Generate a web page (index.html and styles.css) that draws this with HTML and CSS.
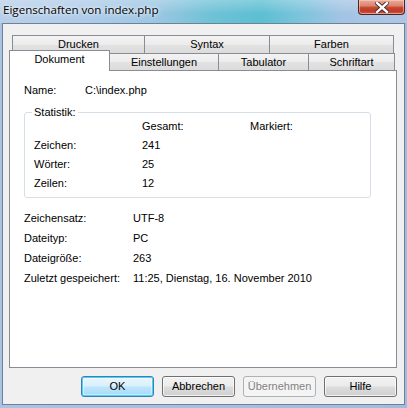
FILE: index.html
```html
<!DOCTYPE html>
<html lang="de">
<head>
<meta charset="utf-8">
<title>Eigenschaften von index.php</title>
<link rel="stylesheet" href="styles.css">
</head>
<body>
<div class="window">
  <div class="titlebar">
    <span class="title">Eigenschaften von index.php</span>
    <div class="close">
      <svg width="14" height="11" viewBox="0 0 14 11">
        <path d="M2 1 L12 10 M12 1 L2 10" stroke="#3a2a2a" stroke-width="4.2" stroke-linecap="square"/>
        <path d="M2 1 L12 10 M12 1 L2 10" stroke="#ffffff" stroke-width="2.4" stroke-linecap="square"/>
      </svg>
    </div>
  </div>
  <div class="client">
    <div class="tabs">
      <div class="tabrow row1">
        <div class="tab t-drucken">Drucken</div>
        <div class="tab t-syntax">Syntax</div>
        <div class="tab t-farben">Farben</div>
      </div>
      <div class="tabrow row2">
        <div class="tab sel t-dokument">Dokument</div>
        <div class="tab t-einst">Einstellungen</div>
        <div class="tab t-tab">Tabulator</div>
        <div class="tab t-schrift">Schriftart</div>
      </div>
      <div class="panel">
        <div class="row name-row"><span class="lbl-name">Name:</span><span>C:\index.php</span></div>
        <div class="group">
          <span class="legend">Statistik:</span>
          <div class="grow"><span class="gcol"></span><span class="gcol">Gesamt:</span><span>Markiert:</span></div>
          <div class="grow"><span class="gcol">Zeichen:</span><span class="gcol">241</span><span></span></div>
          <div class="grow"><span class="gcol">Wörter:</span><span class="gcol">25</span><span></span></div>
          <div class="grow"><span class="gcol">Zeilen:</span><span class="gcol">12</span><span></span></div>
        </div>
        <div class="info">
          <div class="irow"><span class="ilbl">Zeichensatz:</span><span>UTF-8</span></div>
          <div class="irow"><span class="ilbl">Dateityp:</span><span>PC</span></div>
          <div class="irow"><span class="ilbl">Dateigröße:</span><span>263</span></div>
          <div class="irow"><span class="ilbl">Zuletzt gespeichert:</span><span>11:25, Dienstag, 16. November 2010</span></div>
        </div>
      </div>
    </div>
    <div class="buttons">
      <div class="btn default">OK</div>
      <div class="btn">Abbrechen</div>
      <div class="btn disabled">Übernehmen</div>
      <div class="btn">Hilfe</div>
    </div>
  </div>
</div>
</body>
</html>
```

FILE: styles.css
```css
html, body {
  margin: 0;
  padding: 0;
}
body {
  width: 407px;
  height: 408px;
  overflow: hidden;
  font-family: "Liberation Sans", Arial, sans-serif;
  font-size: 11px;
  color: #000;
}
.window {
  width: 407px;
  height: 408px;
  background:
    linear-gradient(90deg, #a9c3e4 0%, #9fbde0 100%);
  display: flex;
  flex-direction: column;
}
.titlebar {
  height: 23px;
  display: flex;
  justify-content: space-between;
  align-items: flex-start;
  background:
    linear-gradient(180deg, rgba(255,255,255,0.25) 0%, rgba(255,255,255,0) 60%),
    linear-gradient(90deg, #b8cfe9 0%, #aecbe9 22%, #9cc7e2 38%, #6fc2d6 52%, #5cbfd2 64%, #7cc4dc 74%, #a4c4e4 84%, #aec6e6 100%);
}
.title {
  font-family: "Open Sans", "Liberation Sans", sans-serif;
  font-size: 11.6px;
  line-height: 20px;
  padding-left: 3px;
  color: #000;
  text-shadow: 0 0 6px rgba(255,255,255,0.9), 0 0 3px rgba(255,255,255,0.9);
}
.close {
  width: 47px;
  height: 15px;
  margin-right: 2px;
  box-sizing: border-box;
  border: 1px solid #4e2420;
  border-top: none;
  border-radius: 0 0 4px 4px;
  background: linear-gradient(180deg, #e9a99a 0%, #dc8670 40%, #c7452f 55%, #c0392b 80%, #d4624a 100%);
  box-shadow: inset 0 0 0 1px rgba(255,220,210,0.5);
  display: flex;
  align-items: center;
  justify-content: center;
}
.client {
  margin: 0 2px 0 2px;
  height: 382px;
  box-sizing: border-box;
  border: 1px solid #6f8196;
  background: #f0f0f0;
  padding: 11px 7px 0 6px;
}
.tabs {
  display: flex;
  flex-direction: column;
}
.tabrow {
  display: flex;
}
.row1 {
  padding-left: 3px;
}
.row2 {
  margin-top: -3px;
  align-items: flex-end;
  position: relative;
  z-index: 2;
}
.tab {
  box-sizing: border-box;
  border: 1px solid #898c95;
  border-bottom: none;
  background: linear-gradient(180deg, #f3f3f3 0%, #ececec 50%, #e2e2e2 51%, #dcdcdc 100%);
  text-align: center;
  margin-left: -1px;
}
.tab:first-child {
  margin-left: 0;
}
.row1 .tab {
  height: 18px;
  line-height: 17px;
}
.row2 .tab {
  height: 17px;
  line-height: 16px;
}
.row2 .tab.sel {
  height: 21px;
  line-height: 16px;
  margin-bottom: -1px;
  background: #ffffff;
  position: relative;
  z-index: 3;
}
.t-drucken { width: 133px; }
.t-syntax { width: 126px; }
.t-farben { width: 125px; }
.t-dokument { width: 101px; }
.t-einst { width: 110px; margin-left: -1px; }
.t-tab { width: 91px; }
.t-schrift { width: 87px; }

.panel {
  width: 388px;
  height: 298px;
  box-sizing: border-box;
  border: 1px solid #898c95;
  background: #ffffff;
  position: relative;
  z-index: 1;
  padding: 12px 0 0 14px;
}
.row {
  display: flex;
  line-height: 14px;
}
.lbl-name {
  width: 61px;
}
.group {
  position: relative;
  margin-top: 15px;
  width: 347px;
  box-sizing: border-box;
  border: 1px solid #d5dfe5;
  border-radius: 3px;
  padding: 4px 0 4px 9px;
}
.legend {
  position: absolute;
  left: 7px;
  top: -8px;
  line-height: 14px;
  padding: 0 2px;
  background: #ffffff;
}
.grow {
  display: flex;
  line-height: 19px;
}
.gcol {
  width: 108px;
}
.info {
  margin-top: 10px;
}
.irow {
  display: flex;
  line-height: 20px;
}
.ilbl {
  width: 109px;
}
.buttons {
  display: flex;
  justify-content: flex-end;
  gap: 8px;
  margin-top: 8px;
}
.btn {
  width: 73px;
  height: 21px;
  box-sizing: border-box;
  border: 1px solid #707070;
  border-radius: 3px;
  background: linear-gradient(180deg, #f2f2f2 0%, #ebebeb 48%, #dddddd 52%, #cfcfcf 100%);
  box-shadow: inset 0 0 0 1px rgba(255,255,255,0.7);
  text-align: center;
  line-height: 19px;
}
.btn.default {
  border-color: #3c7fb1;
  background: linear-gradient(180deg, #eaf6fd 0%, #d9f0fc 48%, #bee6fd 52%, #a7d9f5 100%);
  box-shadow: inset 0 0 0 1px #48d1fc, inset 0 0 0 2px rgba(255,255,255,0.4);
}
.btn.disabled {
  border-color: #adb2b5;
  background: #f4f4f4;
  color: #838383;
  box-shadow: none;
}
```
